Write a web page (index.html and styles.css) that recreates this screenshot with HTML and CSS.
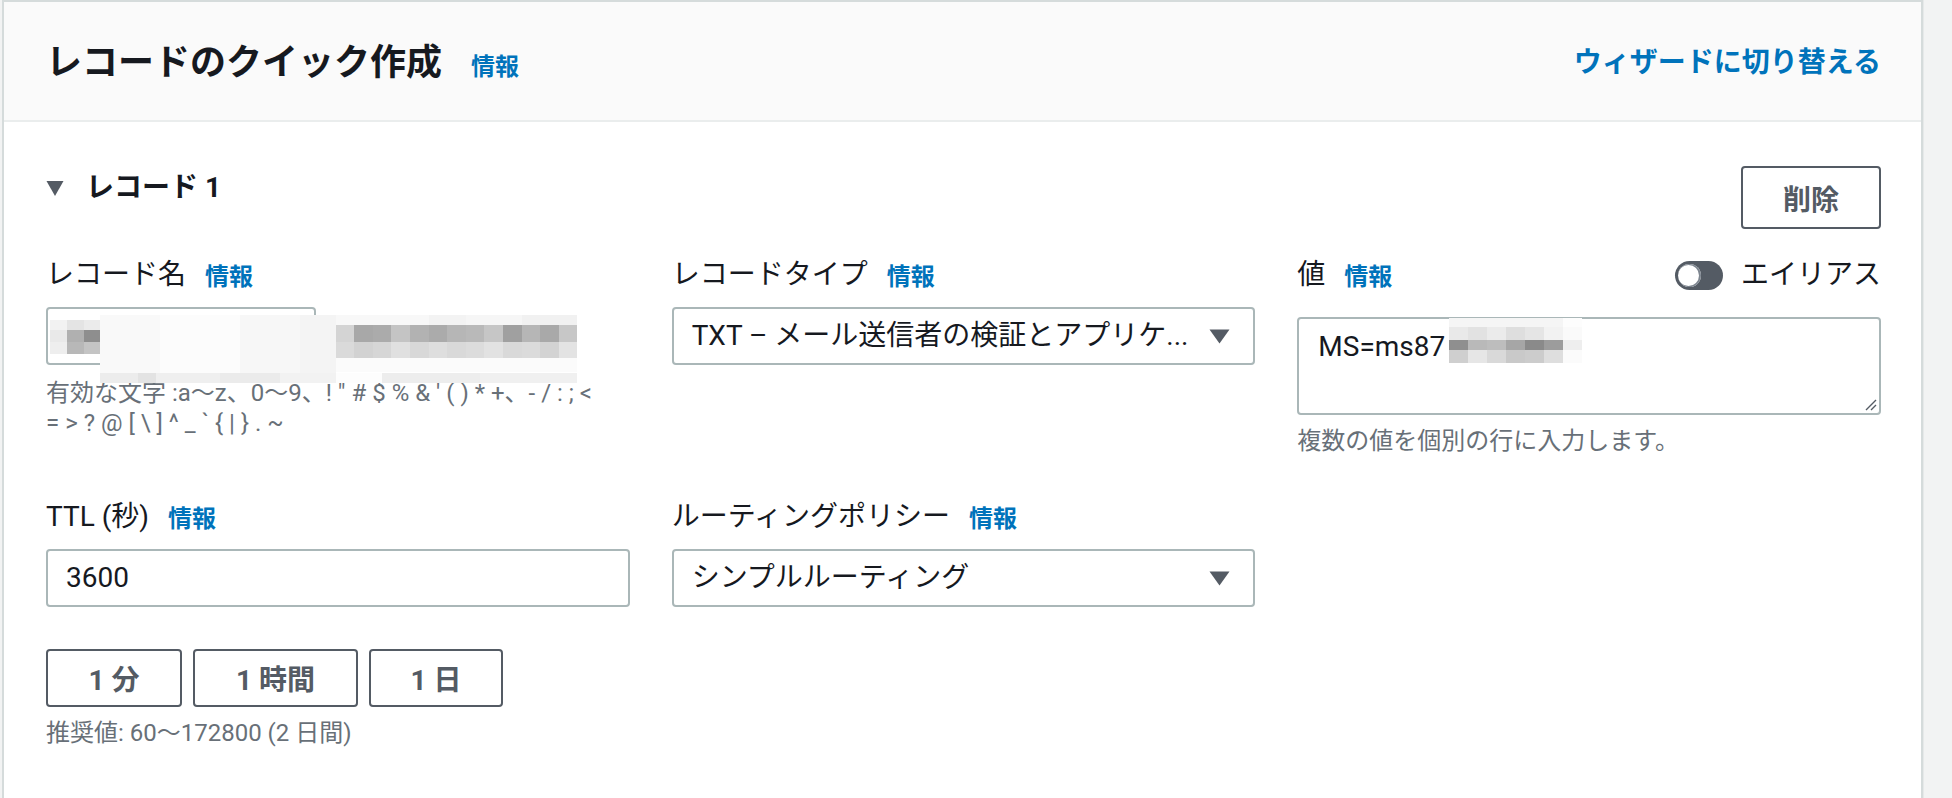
FILE: index.html
```html
<!DOCTYPE html>
<html lang="ja">

<head>
    <title>レコードのクイック作成</title>
    <meta charset="utf-8">
    <meta name="viewport" content="width=device-width, initial-scale=1.0">
    <link rel="stylesheet" href="styles.css">
</head>

<body>
    <div class="panel">
        <header class="panel-head">
            <h2>レコードのクイック作成 <a class="info" href="#">情報</a></h2>
            <a class="switch" href="#">ウィザードに切り替える</a>
        </header>

        <section class="record">
            <div class="record-head">
                <h3>
                    <svg class="expand" width="18" height="17" viewBox="0 0 18 17"><path d="M0.5 1h17l-8.5 15z" fill="#545b64"/></svg>
                    レコード 1
                </h3>
                <button class="btn btn-delete">削除</button>
            </div>

            <div class="fields">
                <!-- レコード名 -->
                <div class="field">
                    <div class="label-row">
                        <label>レコード名</label>
                        <a class="info" href="#">情報</a>
                    </div>
                    <div class="name-row">
                        <div class="input name-input"><span class="mosaic m-in"></span></div>
                        <span class="mosaic m-domain"></span>
                        <span class="redact"></span>
                        <span class="redact-row"></span>
                    </div>
                    <p class="hint"><span class="nowrap">有効な文字 :a〜z、0〜9、! " # $ % &amp; ' ( ) * +、- / : ; &lt;</span><br>= &gt; ? @ [ \ ] ^ _ ` { | } . ~</p>
                </div>

                <!-- レコードタイプ -->
                <div class="field">
                    <div class="label-row">
                        <label>レコードタイプ</label>
                        <a class="info" href="#">情報</a>
                    </div>
                    <div class="select">
                        <span>TXT – メール送信者の検証とアプリケ...</span>
                        <svg width="21" height="15" viewBox="0 0 21 15"><path d="M0.5 0.5h20l-10 14z" fill="#545b64"/></svg>
                    </div>
                </div>

                <!-- 値 -->
                <div class="field">
                    <div class="label-row value-row">
                        <div class="label-row">
                            <label>値</label>
                            <a class="info" href="#">情報</a>
                        </div>
                        <div class="toggle-wrap">
                            <span class="toggle"><span class="knob"></span></span>
                            <span>エイリアス</span>
                        </div>
                    </div>
                    <div class="textarea">
                        <div class="ta-line">MS=ms87<span class="mosaic m-value"></span></div>
                        <svg class="grip" width="14" height="14" viewBox="0 0 14 14"><path d="M13 3L3 13M13 8L8 13" stroke="#545b64" stroke-width="1.4"/></svg>
                    </div>
                    <p class="hint">複数の値を個別の行に入力します。</p>
                </div>

                <!-- TTL -->
                <div class="field">
                    <div class="label-row">
                        <label>TTL (秒)</label>
                        <a class="info" href="#">情報</a>
                    </div>
                    <div class="input">3600</div>
                    <div class="quick">
                        <button class="btn">1 分</button>
                        <button class="btn">1 時間</button>
                        <button class="btn">1 日</button>
                    </div>
                    <p class="hint">推奨値: 60〜172800 (2 日間)</p>
                </div>

                <!-- ルーティングポリシー -->
                <div class="field">
                    <div class="label-row">
                        <label>ルーティングポリシー</label>
                        <a class="info" href="#">情報</a>
                    </div>
                    <div class="select">
                        <span>シンプルルーティング</span>
                        <svg width="21" height="15" viewBox="0 0 21 15"><path d="M0.5 0.5h20l-10 14z" fill="#545b64"/></svg>
                    </div>
                </div>
            </div>
        </section>
    </div>
</body>

</html>
```

FILE: styles.css
```css
* {
    box-sizing: border-box;
}

body {
    margin: 0;
    background: #f2f3f3;
    font-family: Roboto, "Noto Sans CJK JP", sans-serif;
    font-size: 28px;
    line-height: 40px;
    color: #16191f;
}

a {
    text-decoration: none;
}

.panel {
    margin: 0 29px 0 2px;
    min-height: 820px;
    background: #fff;
    border: 2px solid #d5dbdb;
    border-bottom: 0;
    box-shadow: 1px 0 0 #e6e9e9;
}

/* header */
.panel-head {
    height: 120px;
    padding: 8px 40px 0 42px;
    display: flex;
    align-items: center;
    justify-content: space-between;
    background: #fafafa;
    border-bottom: 2px solid #eaeded;
}

.panel-head h2 {
    margin: 0;
    font-size: 36px;
    line-height: 44px;
    font-weight: 700;
}

.panel-head h2 .info {
    margin-left: 20px;
}

.info {
    color: #0073bb;
    font-size: 24px;
    font-weight: 700;
}

.switch {
    color: #0073bb;
    font-weight: 700;
    margin-top: -4px;
}

/* record */
.record {
    padding: 44px 40px 0 42px;
}

.record-head {
    display: flex;
    justify-content: space-between;
    align-items: flex-start;
}

.record-head h3 {
    margin: 2px 0 0;
    display: flex;
    align-items: center;
    gap: 22px;
    font-size: 28px;
    line-height: 40px;
    font-weight: 700;
}

.btn {
    height: 58px;
    padding: 0 40px;
    background: #fff;
    border: 2px solid #545b64;
    border-radius: 4px;
    color: #545b64;
    font-family: inherit;
    font-size: 28px;
    font-weight: 700;
    white-space: nowrap;
    cursor: pointer;
}

.btn-delete {
    height: 63px;
    width: 140px;
    padding: 0;
}

.fields {
    margin-top: 26px;
    display: grid;
    grid-template-columns: repeat(3, 1fr);
    column-gap: 42px;
    row-gap: 41px;
    align-items: start;
}

.label-row {
    display: flex;
    align-items: center;
    gap: 19px;
    height: 40px;
    margin-bottom: 12px;
}

.label-row .info {
    line-height: 40px;
    padding-top: 3px;
}

.value-row {
    justify-content: space-between;
    margin-bottom: 22px;
}

.value-row .label-row {
    margin: 0;
}

.toggle-wrap {
    display: flex;
    align-items: center;
    gap: 18px;
}

.toggle {
    width: 48px;
    height: 29px;
    border-radius: 15px;
    background: #545b64;
    display: flex;
    align-items: center;
    padding-left: 3px;
}

.knob {
    width: 23px;
    height: 23px;
    border-radius: 50%;
    background: #fff;
    box-shadow: -1px 0 0 1px #7d858f inset;
}

.input,
.select {
    height: 58px;
    border: 2px solid #aab7b8;
    border-radius: 4px;
    padding: 0 18px;
    display: flex;
    align-items: center;
    background: #fff;
}

.select {
    justify-content: space-between;
    padding-right: 23px;
    white-space: nowrap;
}

.textarea {
    position: relative;
    height: 98px;
    border: 2px solid #aab7b8;
    border-radius: 4px;
    padding: 8px 18px 0 19px;
}

.ta-line {
    display: flex;
    align-items: flex-start;
}

.grip {
    position: absolute;
    right: 2px;
    bottom: 2px;
}

.hint {
    margin: 11px 0 0;
    font-size: 24px;
    line-height: 30px;
    color: #687078;
}

.nowrap {
    white-space: nowrap;
}

.name-row + .hint {
    margin-top: 13px;
}

.quick {
    display: flex;
    gap: 11px;
    margin-top: 42px;
}

.quick .btn {
    padding: 0;
}

.quick .btn:first-child {
    width: 136px;
}

.quick .btn:nth-child(2) {
    width: 165px;
}

.quick .btn:last-child {
    width: 134px;
}

/* name field with redacted parts */
.name-row {
    position: relative;
    display: flex;
    gap: 20px;
    height: 58px;
}

.name-input {
    width: 270px;
    padding: 0 2px;
}

.mosaic {
    display: inline-block;
    flex: none;
}

.m-in {
    width: 94px;
    height: 34px;
    margin-top: 2px;
    background:
        linear-gradient(90deg, #f2f2f2 0 17px, #e4e4e4 17px 34px, #ebebeb 34px 51px, #e6e6e6 51px 66px, #eeeeee 66px 94px) 0 0 / 100% 10px no-repeat,
        linear-gradient(90deg, #e9e9e9 0 17px, #b0b0b0 17px 34px, #8e8e8e 34px 51px, #cfcfcf 51px 66px, #a9a9a9 66px 80px, #c9c9c9 80px 94px) 0 10px / 100% 12px no-repeat,
        linear-gradient(90deg, #eeeeee 0 17px, #b8b8b8 17px 34px, #c4c4c4 34px 51px, #dedede 51px 66px, #c9c9c9 66px 80px, #e3e3e3 80px 94px) 0 22px / 100% 12px no-repeat;
}

.m-domain {
    width: 241px;
    height: 57px;
    margin-top: 8px;
    background:
        linear-gradient(90deg, #f8f8f8 0 93px, #f3f3f3 93px 130px, #f6f6f6 130px 186px, #f1f1f1 186px 241px) 0 0 / 100% 10px no-repeat,
        linear-gradient(90deg, #d4d4d4 0 18px, #a8a8a8 18px 37px, #ababab 37px 55px, #c4c4c4 55px 74px, #b2b2b2 74px 93px, #ababab 93px 111px, #b6b6b6 111px 130px, #b9b9b9 130px 148px, #c6c6c6 148px 167px, #a0a0a0 167px 186px, #b6b6b6 186px 204px, #a9a9a9 204px 223px, #c7c7c7 223px 241px) 0 10px / 100% 17px no-repeat,
        linear-gradient(90deg, #dadada 0 18px, #d2d2d2 18px 37px, #d6d6d6 37px 55px, #e0e0e0 55px 74px, #d8d8d8 74px 93px, #dedede 93px 111px, #d9d9d9 111px 130px, #dcdcdc 130px 148px, #e2e2e2 148px 167px, #d9d9d9 167px 186px, #dbdbdb 186px 204px, #d3d3d3 204px 223px, #e3e3e3 223px 241px) 0 27px / 100% 16px no-repeat,
        linear-gradient(90deg, #fbfbfb 0 241px) 0 43px / 100% 14px no-repeat;
}

.m-value {
    width: 133px;
    height: 45px;
    margin-top: -9px;
    margin-left: 4px;
    background:
        linear-gradient(90deg, #f5f5f5 0 114px, #fdfdfd 114px 133px) 0 0 / 100% 9px no-repeat,
        linear-gradient(90deg, #e9e9e9 0 19px, #e2e2e2 19px 38px, #ebebeb 38px 57px, #dedede 57px 76px, #e5e5e5 76px 95px, #f2f2f2 95px 114px, #fafafa 114px 133px) 0 9px / 100% 13px no-repeat,
        linear-gradient(90deg, #8f8f8f 0 19px, #b9b9b9 19px 38px, #bdbdbd 38px 57px, #a6a6a6 57px 76px, #8a8a8a 76px 95px, #9c9c9c 95px 114px, #eeeeee 114px 133px) 0 22px / 100% 10px no-repeat,
        linear-gradient(90deg, #cfcfcf 0 19px, #e6e6e6 19px 38px, #d9d9d9 38px 57px, #c9c9c9 57px 76px, #cccccc 76px 95px, #dedede 95px 114px, #fbfbfb 114px 133px) 0 32px / 100% 13px no-repeat;
}

.redact {
    position: absolute;
    left: 54px;
    top: 8px;
    width: 236px;
    height: 58px;
    background:
        linear-gradient(90deg, #f9f9f9 0 60px, #fcfcfc 60px 140px, #f7f7f7 140px 200px, #f4f4f4 200px 236px);
}

.redact-row {
    position: absolute;
    left: 54px;
    top: 66px;
    width: 477px;
    height: 10px;
    background:
        linear-gradient(90deg, #ececec 0 38px, #e3e3e3 38px 56px, #efefef 56px 120px, #ebebeb 120px 180px, #f2f2f2 180px 236px, #fdfdfd 236px 282px, #ededed 282px 380px, #f0f0f0 380px 477px);
}
```
